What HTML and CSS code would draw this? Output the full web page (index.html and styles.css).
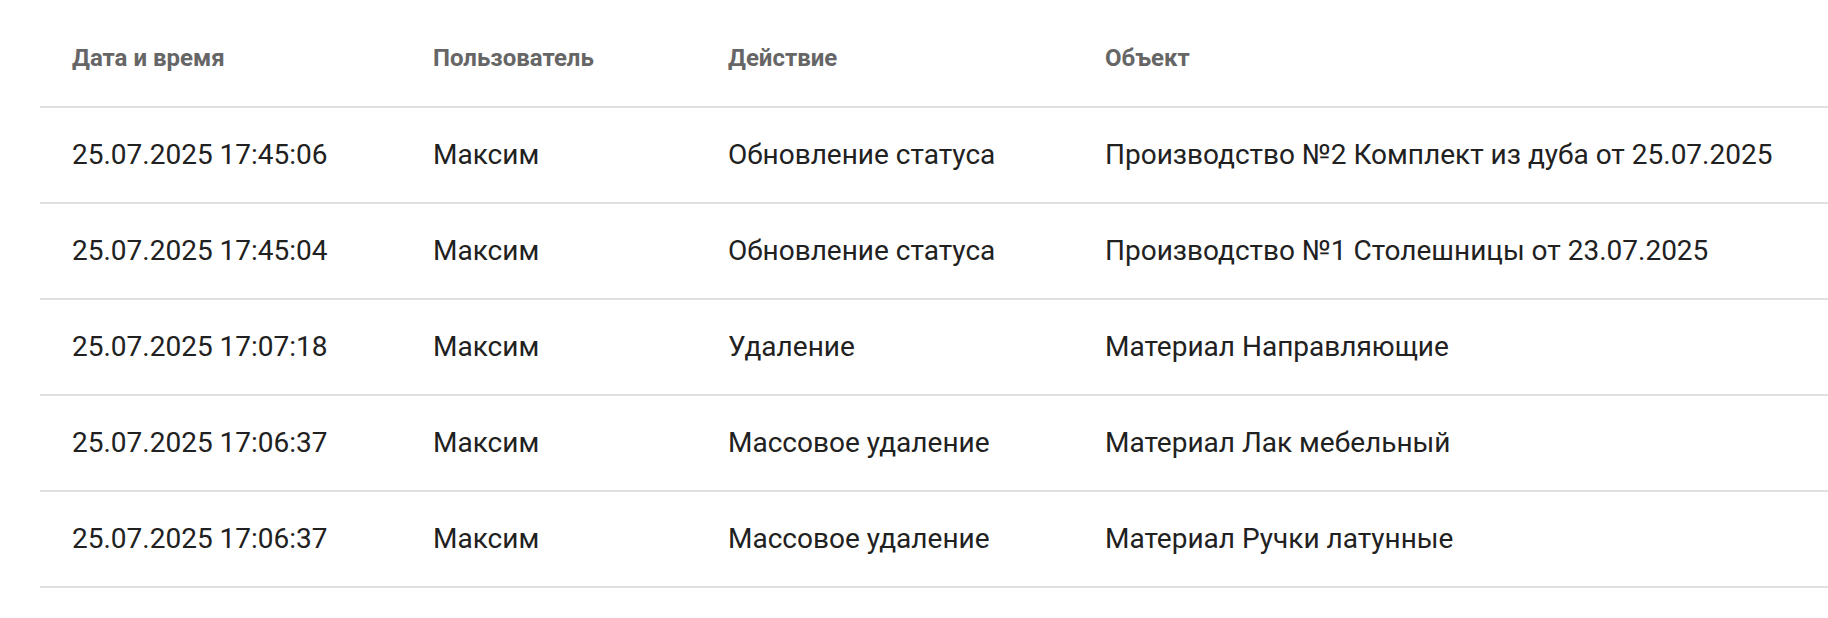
FILE: index.html
```html
<!DOCTYPE html>
<html lang="ru">
<head>
<meta charset="utf-8">
<title>Журнал действий</title>
<link rel="stylesheet" href="styles.css">
</head>
<body>
<table class="log">
  <colgroup>
    <col class="c-date">
    <col class="c-user">
    <col class="c-action">
    <col class="c-object">
  </colgroup>
  <thead>
    <tr>
      <th>Дата и время</th>
      <th>Пользователь</th>
      <th>Действие</th>
      <th>Объект</th>
    </tr>
  </thead>
  <tbody>
    <tr>
      <td>25.07.2025 17:45:06</td>
      <td>Максим</td>
      <td>Обновление статуса</td>
      <td>Производство №2 Комплект из дуба от 25.07.2025</td>
    </tr>
    <tr>
      <td>25.07.2025 17:45:04</td>
      <td>Максим</td>
      <td>Обновление статуса</td>
      <td>Производство №1 Столешницы от 23.07.2025</td>
    </tr>
    <tr>
      <td>25.07.2025 17:07:18</td>
      <td>Максим</td>
      <td>Удаление</td>
      <td>Материал Направляющие</td>
    </tr>
    <tr>
      <td>25.07.2025 17:06:37</td>
      <td>Максим</td>
      <td>Массовое удаление</td>
      <td>Материал Лак мебельный</td>
    </tr>
    <tr>
      <td>25.07.2025 17:06:37</td>
      <td>Максим</td>
      <td>Массовое удаление</td>
      <td>Материал Ручки латунные</td>
    </tr>
  </tbody>
</table>
</body>
</html>
```

FILE: styles.css
```css
html, body {
  margin: 0;
  padding: 0;
  background: #ffffff;
}

body {
  font-family: Roboto, "Liberation Sans", "Noto Sans", sans-serif;
  overflow: hidden;
}

.log {
  margin-left: 40px;
  width: 1788px;
  border-collapse: collapse;
  table-layout: fixed;
}

.c-date { width: 361px; }
.c-user { width: 295px; }
.c-action { width: 377px; }
.c-object { width: auto; }

.log th,
.log td {
  text-align: left;
  padding-left: 32px;
  padding-right: 0;
  white-space: nowrap;
  border-bottom: 2px solid #e0e0e0;
}

.log th {
  padding-top: 44px;
  padding-bottom: 34px;
  font-size: 24px;
  line-height: 28px;
  font-weight: 700;
  color: #666666;
}

.log td {
  padding-top: 31px;
  padding-bottom: 31px;
  font-size: 28px;
  line-height: 32px;
  font-weight: 400;
  color: #212121;
}
```
